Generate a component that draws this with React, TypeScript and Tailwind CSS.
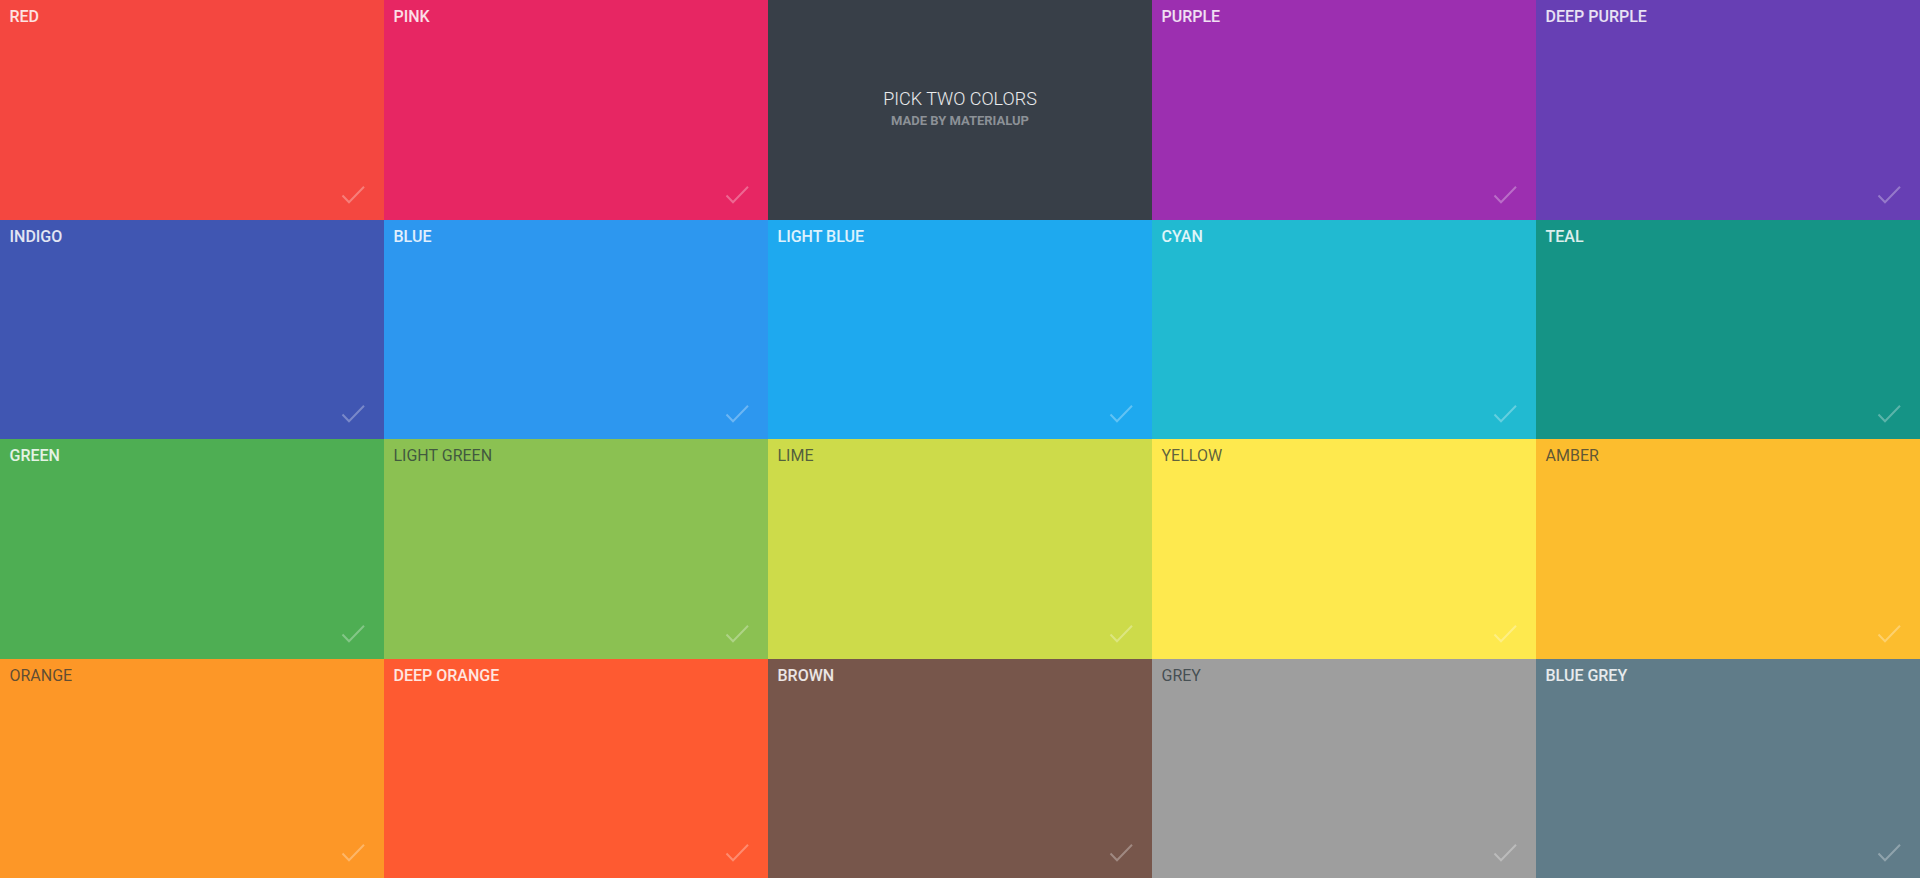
import React from "react";

type Tile = { name: string; bg: string; dark?: boolean };

const tiles: (Tile | null)[] = [
  { name: "RED", bg: "bg-[#F44740]" },
  { name: "PINK", bg: "bg-[#E72663]" },
  null,
  { name: "PURPLE", bg: "bg-[#9C2FB0]" },
  { name: "DEEP PURPLE", bg: "bg-[#673FB4]" },
  { name: "INDIGO", bg: "bg-[#4056B2]" },
  { name: "BLUE", bg: "bg-[#2D97EF]" },
  { name: "LIGHT BLUE", bg: "bg-[#1EA9EF]" },
  { name: "CYAN", bg: "bg-[#21BAD1]" },
  { name: "TEAL", bg: "bg-[#159486]" },
  { name: "GREEN", bg: "bg-[#4EAE53]" },
  { name: "LIGHT GREEN", bg: "bg-[#8BC152]", dark: true },
  { name: "LIME", bg: "bg-[#CDDB4A]", dark: true },
  { name: "YELLOW", bg: "bg-[#FEE94E]", dark: true },
  { name: "AMBER", bg: "bg-[#FCBD2E]", dark: true },
  { name: "ORANGE", bg: "bg-[#FD9727]", dark: true },
  { name: "DEEP ORANGE", bg: "bg-[#FE5A31]" },
  { name: "BROWN", bg: "bg-[#77564B]" },
  { name: "GREY", bg: "bg-[#9E9E9E]", dark: true },
  { name: "BLUE GREY", bg: "bg-[#607C89]" },
];

function Check() {
  return (
    <svg
      width="24"
      height="20"
      viewBox="0 0 24 20"
      fill="none"
      className="self-end mr-[19px] mb-[15px] shrink-0"
    >
      <polyline
        points="1.5,10.5 8,17.3 23,1.8"
        stroke="rgba(255,255,255,0.3)"
        strokeWidth="2"
        strokeLinecap="butt"
        strokeLinejoin="miter"
      />
    </svg>
  );
}

export default function App() {
  return (
    <div
      className="grid grid-cols-5 grid-rows-4 w-full h-[878px] overflow-hidden"
      style={{ fontFamily: "Roboto, 'Noto Sans', sans-serif" }}
    >
      {tiles.map((t, i) =>
        t === null ? (
          <div
            key={i}
            className="bg-[#383F48] flex flex-col items-center justify-center gap-[3px] pb-[3px]"
          >
            <div className="text-[18px] leading-[22px] font-light text-white/90">
              PICK TWO COLORS
            </div>
            <div className="text-[13px] leading-[16px] font-bold text-[#8C9197]">
              MADE BY MATERIALUP
            </div>
          </div>
        ) : (
          <div key={i} className={`${t.bg} flex flex-col justify-between`}>
            <div
              className={`pt-[9px] pl-[9.5px] text-[16px] leading-[16px] ${
                t.dark
                  ? "font-normal text-[rgba(38,50,56,0.74)]"
                  : "font-medium text-white/85"
              }`}
            >
              {t.name}
            </div>
            <Check />
          </div>
        )
      )}
    </div>
  );
}
